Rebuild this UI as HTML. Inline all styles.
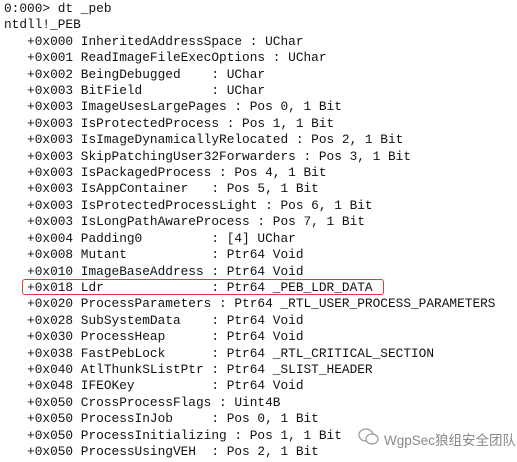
<!DOCTYPE html>
<html><head><meta charset="utf-8"><style>
html,body{margin:0;padding:0;background:#fff;width:517px;height:462px;overflow:hidden;position:relative}
pre{margin:0;position:absolute;left:4px;top:1px;font-family:"Liberation Mono",monospace;font-size:12.8px;line-height:16.4px;color:#111;}
.box{position:absolute;left:22px;top:279px;width:360px;height:14px;border:1.5px solid #e0393e;border-radius:3px}
.wm{position:absolute;left:384px;top:429px;font-family:"Liberation Sans","Noto Sans CJK SC",sans-serif;font-size:13.5px;color:#888}
</style></head><body>
<pre>0:000&gt; dt _peb
ntdll!_PEB
   +0x000 InheritedAddressSpace : UChar
   +0x001 ReadImageFileExecOptions : UChar
   +0x002 BeingDebugged    : UChar
   +0x003 BitField         : UChar
   +0x003 ImageUsesLargePages : Pos 0, 1 Bit
   +0x003 IsProtectedProcess : Pos 1, 1 Bit
   +0x003 IsImageDynamicallyRelocated : Pos 2, 1 Bit
   +0x003 SkipPatchingUser32Forwarders : Pos 3, 1 Bit
   +0x003 IsPackagedProcess : Pos 4, 1 Bit
   +0x003 IsAppContainer   : Pos 5, 1 Bit
   +0x003 IsProtectedProcessLight : Pos 6, 1 Bit
   +0x003 IsLongPathAwareProcess : Pos 7, 1 Bit
   +0x004 Padding0         : [4] UChar
   +0x008 Mutant           : Ptr64 Void
   +0x010 ImageBaseAddress : Ptr64 Void
   +0x018 Ldr              : Ptr64 _PEB_LDR_DATA
   +0x020 ProcessParameters : Ptr64 _RTL_USER_PROCESS_PARAMETERS
   +0x028 SubSystemData    : Ptr64 Void
   +0x030 ProcessHeap      : Ptr64 Void
   +0x038 FastPebLock      : Ptr64 _RTL_CRITICAL_SECTION
   +0x040 AtlThunkSListPtr : Ptr64 _SLIST_HEADER
   +0x048 IFEOKey          : Ptr64 Void
   +0x050 CrossProcessFlags : Uint4B
   +0x050 ProcessInJob     : Pos 0, 1 Bit
   +0x050 ProcessInitializing : Pos 1, 1 Bit
   +0x050 ProcessUsingVEH  : Pos 2, 1 Bit</pre>
<div class="box"></div>
<svg style="position:absolute;left:358px;top:427px" width="22" height="20" viewBox="0 0 22 20"><ellipse cx="8" cy="8" rx="7" ry="6" fill="none" stroke="#999" stroke-width="1.2"/><ellipse cx="14" cy="12" rx="6" ry="5" fill="#fff" stroke="#999" stroke-width="1.2"/></svg>
<div class="wm">WgpSec狼组安全团队</div>
</body></html>
